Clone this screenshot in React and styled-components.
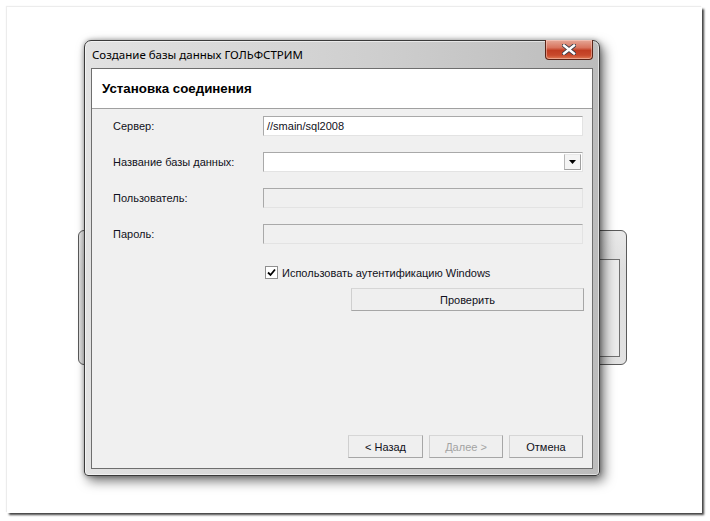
import React from 'react';
import styled, { createGlobalStyle } from 'styled-components';

const GlobalStyle = createGlobalStyle`
  html, body {
    margin: 0;
    padding: 0;
    background: #ffffff;
  }
`;

const Stage = styled.div`
  width: 710px;
  height: 521px;
  box-sizing: border-box;
  padding: 7px 0 0 7px;
  background: #ffffff;
  overflow: hidden;
  font-family: 'Liberation Sans', Arial, sans-serif;
`;

const Sheet = styled.div`
  position: relative;
  width: 695px;
  height: 506px;
  background: #ffffff;
  box-shadow: 2px 2px 2px rgba(0, 0, 0, 0.75), -1px -1px 1px rgba(0, 0, 0, 0.07);
`;

const BackWindow = styled.div`
  position: absolute;
  left: 71px;
  top: 223px;
  width: 549px;
  height: 135px;
  box-sizing: border-box;
  padding: 28px 6px 7px 6px;
  display: flex;
  border: 1px solid #5a5a5a;
  border-radius: 6px;
  background: linear-gradient(180deg, #e9e9e9 0%, #dedede 30%, #e2e2e2 100%);
`;

const BackPanel = styled.div`
  flex: 1;
  border: 1px solid #707070;
  background: #ececec;
`;

const Dialog = styled.div`
  position: absolute;
  left: 77px;
  top: 33px;
  width: 516px;
  height: 436px;
  box-sizing: border-box;
  display: flex;
  flex-direction: column;
  padding: 0 6px 6px 6px;
  border: 1px solid #3a3a3a;
  border-radius: 7px 7px 4px 4px;
  background: linear-gradient(90deg, #e2e2e2 0%, #cfcfcf 55%, #bcbcbc 100%);
  box-shadow: inset 0 0 0 1px rgba(255, 255, 255, 0.55), 4px 5px 12px rgba(0, 0, 0, 0.55),
    0 0 5px rgba(0, 0, 0, 0.35);
`;

const TitleBar = styled.div`
  height: 27px;
  display: flex;
  align-items: center;
  padding-left: 1px;
  font-family: 'Noto Sans', 'Open Sans', sans-serif;
  font-size: 11.5px;
  color: #000000;
`;

const CloseButton = styled.div`
  position: absolute;
  top: -1px;
  right: 6px;
  width: 48px;
  height: 20px;
  box-sizing: border-box;
  display: flex;
  align-items: center;
  justify-content: center;
  border: 1px solid #5b2417;
  border-top: none;
  border-radius: 0 0 4px 4px;
  background: linear-gradient(180deg, #e6a898 0%, #d8745e 40%, #c13d22 55%, #c8492c 80%, #e07a54 100%);
  box-shadow: inset 0 0 0 1px rgba(255, 220, 210, 0.45);
`;

const Client = styled.div`
  flex: 1;
  display: flex;
  flex-direction: column;
  border: 1px solid #6e6e6e;
  background: #f0f0f0;
`;

const Header = styled.div`
  height: 39px;
  display: flex;
  align-items: center;
  padding-left: 10px;
  background: #ffffff;
  border-bottom: 1px solid #a0a0a0;
  font-weight: bold;
  font-size: 13.3px;
  color: #000000;
`;

const Body = styled.div`
  flex: 1;
  display: flex;
  flex-direction: column;
  padding: 7px 9px 10px 21px;
`;

const Form = styled.div`
  display: grid;
  grid-template-columns: 150px 320px;
  grid-auto-rows: 20px;
  row-gap: 16px;
  align-items: center;
`;

const Label = styled.span`
  font-size: 11px;
  color: #101020;
`;

const Field = styled.div`
  height: 20px;
  box-sizing: border-box;
  display: flex;
  align-items: center;
  padding-left: 3px;
  border: 1px solid;
  border-color: #a9a9a9 #e3e3e3 #e3e3e3 #a9a9a9;
  background: ${p => (p.$disabled ? '#f0f0f0' : '#ffffff')};
  font-size: 11px;
  color: #101020;
`;

const Combo = styled(Field)`
  justify-content: space-between;
  padding-right: 1px;
`;

const DropButton = styled.div`
  width: 17px;
  height: 16px;
  box-sizing: border-box;
  display: flex;
  align-items: center;
  justify-content: center;
  border: 1px solid;
  border-color: #e8e8e8 #a0a0a0 #a0a0a0 #b8b8b8;
  background: #f4f4f4;
`;

const CheckRow = styled.label`
  margin: 22px 0 0 152px;
  display: flex;
  align-items: center;
  gap: 4px;
  font-size: 11px;
  color: #101020;
`;

const Box = styled.span`
  width: 13px;
  height: 13px;
  box-sizing: border-box;
  display: flex;
  align-items: center;
  justify-content: center;
  border: 1px solid #8f8f8f;
  background: #ffffff;
`;

const Button = styled.div`
  height: 23px;
  width: ${p => p.$width || 75}px;
  box-sizing: border-box;
  display: flex;
  align-items: center;
  justify-content: center;
  border: 1px solid;
  border-color: #d6d6d6 #a6a6a6 #a6a6a6 #cfcfcf;
  background: #efefef;
  font-size: 11px;
  color: ${p => (p.$disabled ? '#a3a3a3' : '#101020')};
`;

const CheckButtonRow = styled.div`
  margin: 9px 0 0 238px;
`;

const Spacer = styled.div`
  flex: 1;
`;

const ButtonBar = styled.div`
  display: flex;
  justify-content: flex-end;
  gap: 6px;
`;

const CloseGlyph = () => (
  <svg width="14" height="11" viewBox="0 0 14 11">
    <path d="M2 1.5 L12 9.5 M12 1.5 L2 9.5" stroke="#3c3c46" strokeWidth="4.2" strokeLinecap="square" />
    <path d="M2 1.5 L12 9.5 M12 1.5 L2 9.5" stroke="#ffffff" strokeWidth="2.4" strokeLinecap="square" />
  </svg>
);

const Arrow = () => (
  <svg width="7" height="4" viewBox="0 0 7 4">
    <path d="M0 0 H7 L3.5 4 Z" fill="#000000" />
  </svg>
);

const Tick = () => (
  <svg width="9" height="9" viewBox="0 0 9 9">
    <path d="M1 4.5 L3.5 7 L8 1.5" stroke="#000000" strokeWidth="1.8" fill="none" />
  </svg>
);

const fields = [
  { label: 'Сервер:', value: '//smain/sql2008' },
  { label: 'Название базы данных:', combo: true },
  { label: 'Пользователь:', disabled: true },
  { label: 'Пароль:', disabled: true },
];

const App = () => {
  return (
    <Stage>
      <GlobalStyle />
      <Sheet>
        <BackWindow>
          <BackPanel />
        </BackWindow>
        <Dialog>
          <TitleBar>Создание базы данных ГОЛЬФСТРИМ</TitleBar>
          <CloseButton>
            <CloseGlyph />
          </CloseButton>
          <Client>
            <Header>Установка соединения</Header>
            <Body>
              <Form>
                {fields.map(f => (
                  <React.Fragment key={f.label}>
                    <Label>{f.label}</Label>
                    {f.combo ? (
                      <Combo>
                        <span />
                        <DropButton>
                          <Arrow />
                        </DropButton>
                      </Combo>
                    ) : (
                      <Field $disabled={f.disabled}>{f.value}</Field>
                    )}
                  </React.Fragment>
                ))}
              </Form>
              <CheckRow>
                <Box>
                  <Tick />
                </Box>
                Использовать аутентификацию Windows
              </CheckRow>
              <CheckButtonRow>
                <Button $width={233}>Проверить</Button>
              </CheckButtonRow>
              <Spacer />
              <ButtonBar>
                <Button>&lt; Назад</Button>
                <Button $width={74} $disabled>Далее &gt;</Button>
                <Button $width={74}>Отмена</Button>
              </ButtonBar>
            </Body>
          </Client>
        </Dialog>
      </Sheet>
    </Stage>
  );
};

export default App;
